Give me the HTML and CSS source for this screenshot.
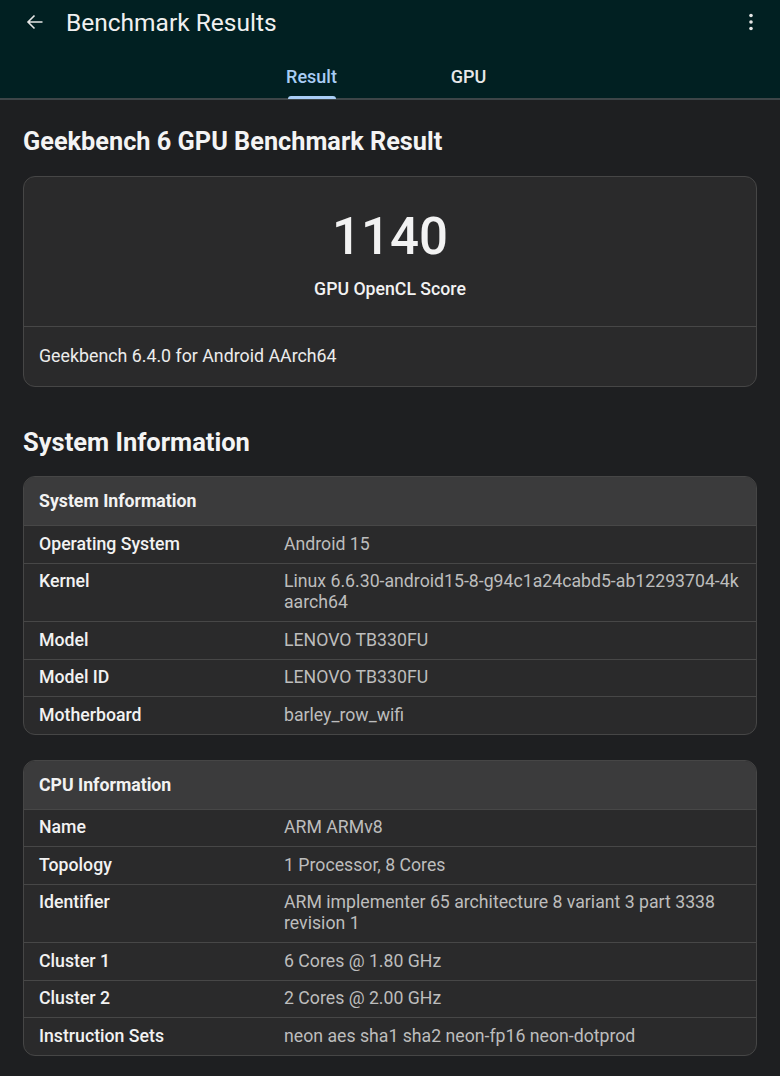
FILE: index.html
```html
<!DOCTYPE html>
<html>

<head>
    <title>Benchmark Results</title>
    <link rel="stylesheet" href="styles.css">
</head>

<body>
    <!-- Top app bar with tabs -->
    <header class="appbar">
        <div class="toolbar">
            <svg class="icon back" viewBox="0 0 24 24" width="24" height="24">
                <path d="M19.5 12H5M11.5 5.5L5 12l6.5 6.5" fill="none" stroke="#e6e6e6" stroke-width="1.6" />
            </svg>
            <span class="title">Benchmark Results</span>
            <svg class="icon more" viewBox="0 0 24 24" width="24" height="24">
                <circle cx="12" cy="5.5" r="1.8" fill="#e6e6e6" />
                <circle cx="12" cy="12" r="1.8" fill="#e6e6e6" />
                <circle cx="12" cy="18.5" r="1.8" fill="#e6e6e6" />
            </svg>
        </div>
        <nav class="tabs">
            <div class="tab active">
                <span>Result</span>
                <div class="indicator"></div>
            </div>
            <div class="tab">
                <span>GPU</span>
            </div>
        </nav>
    </header>

    <main class="content">
        <h2 class="section-title first">Geekbench 6 GPU Benchmark Result</h2>

        <!-- Score card -->
        <div class="card">
            <div class="score-box">
                <div class="score">1140</div>
                <div class="score-label">GPU OpenCL Score</div>
            </div>
            <div class="score-footer">Geekbench 6.4.0 for Android AArch64</div>
        </div>

        <h2 class="section-title">System Information</h2>

        <!-- System information table -->
        <div class="card info">
            <div class="info-head">System Information</div>
            <div class="info-row"><span class="key">Operating System</span><span class="val">Android 15</span></div>
            <div class="info-row"><span class="key">Kernel</span><span class="val">Linux 6.6.30-android15-8-g94c1a24cabd5-ab12293704-4k aarch64</span></div>
            <div class="info-row"><span class="key">Model</span><span class="val">LENOVO TB330FU</span></div>
            <div class="info-row"><span class="key">Model ID</span><span class="val">LENOVO TB330FU</span></div>
            <div class="info-row"><span class="key">Motherboard</span><span class="val">barley_row_wifi</span></div>
        </div>

        <!-- CPU information table -->
        <div class="card info">
            <div class="info-head">CPU Information</div>
            <div class="info-row"><span class="key">Name</span><span class="val">ARM ARMv8</span></div>
            <div class="info-row"><span class="key">Topology</span><span class="val">1 Processor, 8 Cores</span></div>
            <div class="info-row"><span class="key">Identifier</span><span class="val">ARM implementer 65 architecture 8 variant 3 part 3338 revision 1</span></div>
            <div class="info-row"><span class="key">Cluster 1</span><span class="val">6 Cores @ 1.80 GHz</span></div>
            <div class="info-row"><span class="key">Cluster 2</span><span class="val">2 Cores @ 2.00 GHz</span></div>
            <div class="info-row"><span class="key">Instruction Sets</span><span class="val">neon aes sha1 sha2 neon-fp16 neon-dotprod</span></div>
        </div>
    </main>
</body>

</html>
```

FILE: styles.css
```css
/* Page basics */
body {
    margin: 0;
    background-color: #1e1f21;
    color: #f2f2f2;
    font-family: Roboto, "Liberation Sans", sans-serif;
}

/* App bar */
.appbar {
    background-color: #012022;
    border-bottom: 2px solid #3d4548;
}

.toolbar {
    height: 44px;
    display: flex;
    align-items: center;
    padding: 0 17px 0 23px;
}

.title {
    margin-left: 19px;
    font-size: 24.5px;
    color: #f0f0f0;
    flex: 1;
}

.tabs {
    height: 54px;
    display: flex;
    justify-content: center;
}

.tab {
    width: 157px;
    display: flex;
    flex-direction: column;
    align-items: center;
    padding-top: 22px;
    box-sizing: border-box;
    font-size: 18px;
    line-height: 22px;
    font-weight: 500;
    color: #e8e8e8;
}

.tab.active {
    color: #a9cdf5;
}

.indicator {
    margin-top: auto;
    margin-bottom: -1px;
    width: 48px;
    height: 3px;
    border-radius: 3px 3px 0 0;
    background-color: #a9cdf5;
}

/* Main content */
.content {
    padding: 0 23px 20px;
}

.section-title {
    margin: 39px 0 18px;
    font-size: 25.5px;
    line-height: 32px;
    font-weight: 700;
    color: #f4f4f4;
}

.section-title.first {
    margin-top: 26px;
    font-size: 25.3px;
    margin-bottom: 18px;
}

.card {
    background-color: #2a2a2b;
    border: 1px solid #464646;
    border-radius: 12px;
    overflow: hidden;
}

/* Score card */
.score-box {
    padding: 30px 0 25px;
    text-align: center;
    border-bottom: 1px solid #474747;
}

.score {
    font-size: 51px;
    line-height: 60px;
    font-weight: 500;
    color: #f2f2f2;
}

.score-label {
    margin-top: 10px;
    font-size: 17.7px;
    line-height: 24px;
    font-weight: 500;
}

.score-footer {
    padding: 17px 15px 18px;
    font-size: 17.8px;
    line-height: 24px;
    color: #ececec;
}

/* Info tables */
.info {
    margin-bottom: 25px;
}

.info-head {
    background-color: #3b3b3c;
    padding: 13px 15px 13px;
    font-size: 17.7px;
    line-height: 22px;
    font-weight: 700;
}

.info-row {
    display: grid;
    grid-template-columns: 245px 1fr;
    padding: 7.75px 15px 7.75px;
    border-top: 1px solid #474747;
    font-size: 17.7px;
    line-height: 21px;
}

.key {
    font-weight: 500;
    color: #f2f2f2;
}

.val {
    line-height: 21px;
    color: #bdbdbd;
}
```
